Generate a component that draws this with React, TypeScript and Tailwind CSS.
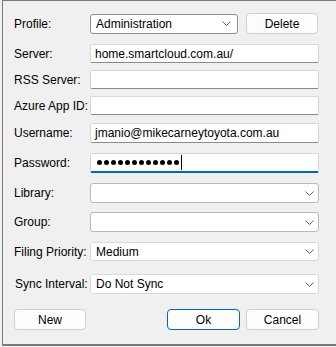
import React from 'react';

const font = { fontFamily: '"Segoe UI", "Liberation Sans", Arial, sans-serif' };

function Chevron() {
  return (
    <svg width="9" height="5" viewBox="0 0 9 5" className="shrink-0">
      <path d="M0.5 0.5 L4.5 4.5 L8.5 0.5" fill="none" stroke="#606060" strokeWidth="1" />
    </svg>
  );
}

function Row({ label, top, children, labelClass = '' }: { label: string; top: string; children: React.ReactNode; labelClass?: string }) {
  return (
    <div className={`flex items-center ${top}`}>
      <div className={`w-[76px] shrink-0 whitespace-nowrap text-[12px] text-black leading-none ${labelClass}`}>{label}</div>
      <div className="flex-1">{children}</div>
    </div>
  );
}

function TextBox({ value }: { value?: string }) {
  return (
    <div className="h-[19px] bg-white border border-[#d6d6d6] border-b-[#8a8a8a] rounded-[2px] flex items-center px-[4px] text-[12px] text-black leading-none">
      {value}
    </div>
  );
}

function Combo({ value, h = 'h-[20px]', border = 'border-[#b8b8b8]' }: { value?: string; h?: string; border?: string }) {
  return (
    <div className={`${h} bg-white border ${border} rounded-[3px] flex items-center justify-between pl-[5px] pr-[4px] text-[12px] text-black leading-none`}>
      <span>{value}</span>
      <Chevron />
    </div>
  );
}

function Button({ children, primary = false, w }: { children: React.ReactNode; primary?: boolean; w: string }) {
  return (
    <button
      className={`${w} h-[21px] bg-[#fdfdfd] rounded-[4px] border text-[12px] text-black leading-none flex items-center justify-center ${
        primary ? 'border-[#0067c0]' : 'border-[#d0d0d0]'
      }`}
    >
      {children}
    </button>
  );
}

export default function App() {
  return (
    <div className="w-[336px] h-[347px] bg-[#f0f0f0]" style={font}>
      <div className="ml-[2px] h-[346px] border-l border-t border-b-2 border-[#7a7a7a] pl-[11px] pr-[17px]">
        {/* Profile */}
        <div className="flex items-center mt-[12px]">
          <div className="w-[76px] shrink-0 text-[12px] text-black leading-none">Profile:</div>
          <div className="w-[148px] h-[20px] bg-white border border-[#8d8d8d] rounded-[3px] flex items-center justify-between pl-[5px] pr-[6px] text-[12px] text-black leading-none">
            <span>Administration</span>
            <Chevron />
          </div>
          <div className="ml-[8px]">
            <Button w="w-[72px]">Delete</Button>
          </div>
        </div>

        <Row label="Server:" top="mt-[10px]">
          <TextBox value="home.smartcloud.com.au/" />
        </Row>
        <Row label="RSS Server:" top="mt-[7px]">
          <TextBox />
        </Row>
        <Row label="Azure App ID:" top="mt-[7px]">
          <TextBox />
        </Row>
        <Row label="Username:" top="mt-[8px]">
          <div className="h-[20px] bg-white border border-[#d6d6d6] border-b-[#8a8a8a] rounded-[2px] flex items-center px-[4px] text-[12px] text-black leading-none">
            jmanio@mikecarneytoyota.com.au
          </div>
        </Row>
        <Row label="Password:" top="mt-[10px]">
          <div className="h-[20px] bg-white border border-[#d6d6d6] border-b-2 border-b-[#0067c0] rounded-[2px] flex items-center pl-[6px]">
            <div className="flex items-center gap-[2px]">
              {Array.from({ length: 12 }).map((_, i) => (
                <span key={i} className="w-[5px] h-[5px] rounded-full bg-black" />
              ))}
            </div>
            <span className="ml-[2px] w-px h-[15px] bg-black" />
          </div>
        </Row>
        <Row label="Library:" top="mt-[10px]">
          <Combo />
        </Row>
        <Row label="Group:" top="mt-[9px]">
          <Combo />
        </Row>
        <Row label="Filing Priority:" top="mt-[10px]">
          <Combo value="Medium" h="h-[19px]" border="border-[#d9d9d9]" />
        </Row>
        <Row label="Sync Interval:" top="mt-[13px]" labelClass="pl-[1px]">
          <Combo value="Do Not Sync" border="border-[#d9d9d9]" />
        </Row>

        <div className="flex items-center mt-[15px]">
          <Button w="w-[72px]">New</Button>
          <div className="flex-1" />
          <Button w="w-[73px]" primary>
            Ok
          </Button>
          <div className="ml-[6px]">
            <Button w="w-[73px]">Cancel</Button>
          </div>
        </div>
      </div>
    </div>
  );
}
